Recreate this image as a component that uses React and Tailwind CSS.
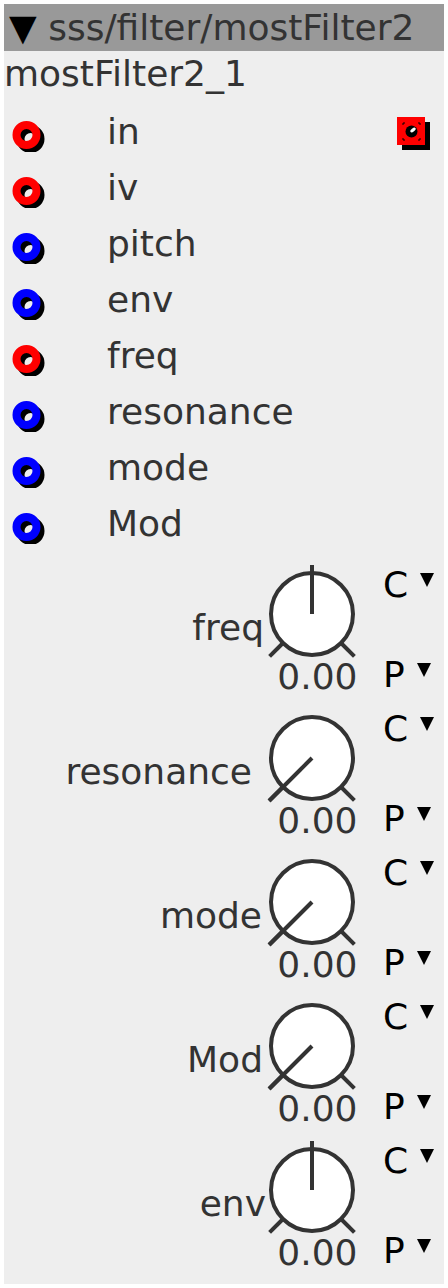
const inlets = [
  { name: 'in', color: '#ff0000' },
  { name: 'iv', color: '#ff0000' },
  { name: 'pitch', color: '#0000ff' },
  { name: 'env', color: '#0000ff' },
  { name: 'freq', color: '#ff0000' },
  { name: 'resonance', color: '#0000ff' },
  { name: 'mode', color: '#0000ff' },
  { name: 'Mod', color: '#0000ff' },
]

const knobs = [
  { label: 'freq', up: true, mr: 'mr-0' },
  { label: 'resonance', up: false, mr: 'mr-[12px]' },
  { label: 'mode', up: false, mr: 'mr-[2px]' },
  { label: 'Mod', up: false, mr: 'mr-[1px]' },
  { label: 'env', up: true, mr: '-mr-[2px]' },
]

const Ring = ({ color }) => (
  <svg width="40" height="40" viewBox="0 0 40 40" className="shrink-0">
    <circle cx="22.5" cy="27" r="10" fill="none" stroke="#000" strokeWidth="8" />
    <circle cx="18.5" cy="23" r="10" fill="none" stroke={color} strokeWidth="8" />
  </svg>
)

const Outlet = () => (
  <svg width="36" height="36" viewBox="0 0 36 36" className="shrink-0">
    <rect x="7" y="8" width="28" height="28" fill="#000" />
    <rect x="2" y="3" width="28" height="28" fill="#ff0000" />
    <circle cx="16.5" cy="17.5" r="6" fill="#000" />
    <ellipse cx="18" cy="16" rx="3.2" ry="1.6" fill="#fff" transform="rotate(-40 18 16)" />
    <path d="M8 11v-2h2M23 9h2v2M8 24v2h2M23 26h2v-2" fill="none" stroke="#000" strokeWidth="1" />
  </svg>
)

const Knob = ({ up }) => (
  <svg width="96" height="96" viewBox="0 0 96 96" className="block">
    <line x1="19" y1="79" x2="5.6" y2="92.4" stroke="#333" strokeWidth="4" />
    <line x1="77" y1="79" x2="90.4" y2="92.4" stroke="#333" strokeWidth="4" />
    <circle cx="48" cy="50" r="41" fill="#fff" stroke="#333" strokeWidth="4" />
    {up ? (
      <line x1="48" y1="50" x2="48" y2="1" stroke="#333" strokeWidth="4" />
    ) : (
      <line x1="48" y1="50" x2="5" y2="93" stroke="#333" strokeWidth="4" />
    )}
  </svg>
)

const Drop = ({ letter }) => (
  <div className="flex h-[42px] items-start">
    <span className="leading-[42px] text-black">{letter}</span>
    <span className="ml-3 mt-[9px] h-0 w-0 border-x-[7px] border-t-[14px] border-x-transparent border-t-black" />
  </div>
)

export default function App() {
  return (
    <div className="min-h-[1288px] bg-white p-1 font-['DejaVu_Sans',sans-serif] text-[36px]">
      <div className="h-[1280px] w-[440px] bg-[#eeeeee]">
        <div className="h-[47px] bg-[#999999] pl-[5px] leading-[47px] text-[#333] whitespace-nowrap">
          <span className="text-black">▼</span> sss/filter/mostFilter2
        </div>
        <div className="h-[53px] pt-[2px] leading-[42px] text-[#333]">mostFilter2_1</div>

        {inlets.map((inlet, i) => (
          <div key={inlet.name} className="flex h-[56px] items-center pl-1">
            <Ring color={inlet.color} />
            <span className="ml-[59px] flex-1 leading-[42px] text-[#333]">{inlet.name}</span>
            {i === 0 && (
              <div className="mr-[13px]">
                <Outlet />
              </div>
            )}
          </div>
        ))}

        {knobs.map((knob) => (
          <div key={knob.label} className="flex h-[144px]">
            <div className="flex min-w-0 flex-1 items-start justify-end pt-[54.5px]">
              <span className={`leading-[42px] text-[#333] ${knob.mr}`}>{knob.label}</span>
            </div>
            <div className="flex w-[96px] shrink-0 flex-col">
              <div className="mt-[11.5px]">
                <Knob up={knob.up} />
              </div>
              <div className="-mt-[4px] flex justify-end pr-[2.5px]">
                <span className="leading-[42px] text-[#333]">0.00</span>
              </div>
            </div>
            <div className="ml-[23px] flex w-[61px] shrink-0 flex-col pt-[11.5px]">
              <Drop letter="C" />
              <div className="h-[50px]" />
              <Drop letter="P" />
            </div>
          </div>
        ))}
      </div>
    </div>
  )
}
